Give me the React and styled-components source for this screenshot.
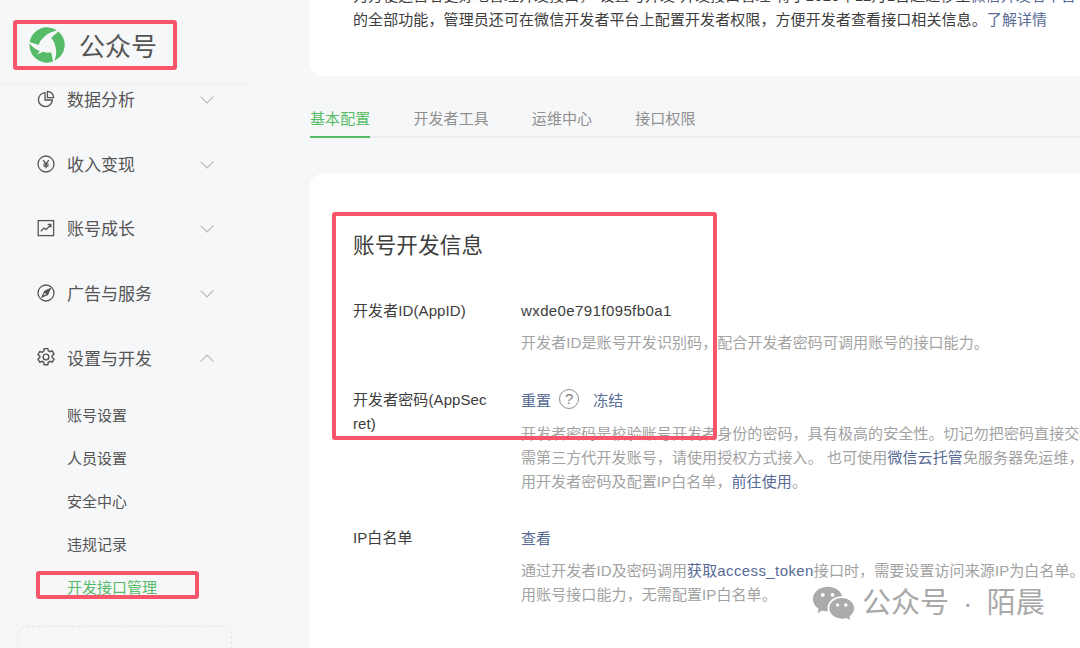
import styled, { createGlobalStyle } from 'styled-components';
import { RiWechatFill } from 'react-icons/ri';

const GlobalStyle = createGlobalStyle`
    html, body {
        margin:0;
        height:648px;
        overflow:hidden;
        background:#f6f7f9;
        font-family:"Liberation Sans","Noto Sans CJK SC",sans-serif;
        color:#3d3d3d;
    }
`;

const menus = [
    { name: '数据分析', icon: 'chart' },
    { name: '收入变现', icon: 'yen' },
    { name: '账号成长', icon: 'growth' },
    { name: '广告与服务', icon: 'compass' },
    { name: '设置与开发', icon: 'gear', open: true },
];
const subMenus = ['账号设置', '人员设置', '安全中心', '违规记录'];
const tabs = ['基本配置', '开发者工具', '运维中心', '接口权限'];
const bladePath = 'M.6 15A17.500 17.500 0 0 1 28 3.600Q20 5 15.500 9.600Q11 13.500 9.600 18Z';

function MenuIcon({ type }) {
    return (
        <IconSvg viewBox="0 0 18 18">
            {type === 'chart' && (
                <>
                    <path d="M8 2.600a7 7 0 1 0 7.400 7.400H8z" />
                    <path d="M10.400 1.400v6.200h6.200a6.200 6.200 0 0 0-6.200-6.200z" />
                </>
            )}
            {type === 'yen' && (
                <>
                    <circle cx="9" cy="9" r="8" />
                    <path d="M6.200 5.200 9 9l2.800-3.800M9 9v4.200M6.400 9.200h5.200M6.400 11h5.200" />
                </>
            )}
            {type === 'growth' && (
                <>
                    <rect x="1.200" y="1.600" width="15.400" height="15" />
                    <path d="M3.800 12.200 7 9l2 1.600 4.400-4.600M10.600 5.400h3.200v3" />
                </>
            )}
            {type === 'compass' && (
                <>
                    <circle cx="9" cy="9" r="8" />
                    <path d="M12.800 5.200 7.600 7.600 5.200 12.800l5.200-2.400z" />
                    <path d="M12.800 5.200 7.600 7.600l2.800 2.800z" fill="#555" />
                </>
            )}
            {type === 'gear' && (
                <g transform="translate(-.9 -.9) scale(1.100)">
                    <path d="M7.400 1.200h3.200l.5 2.200 1.400.8 2.200-.7 1.600 2.800-1.700 1.500v1.600l1.700 1.500-1.600 2.800-2.200-.7-1.400.8-.5 2.200H7.400l-.5-2.200-1.400-.8-2.200.7-1.600-2.800 1.700-1.500V8.300L1.700 6.800l1.600-2.800 2.200.7 1.400-.8z" />
                    <circle cx="9" cy="9" r="2.600" />
                </g>
            )}
        </IconSvg>
    );
}

function Chevron({ up }) {
    return (
        <ChevronSvg viewBox="0 0 14 8">
            <path d={up ? 'M.7 7.300 7 1l6.300 6.300' : 'M.7.700 7 7 13.300.700'} />
        </ChevronSvg>
    );
}

function App() {
    return (
        <Page>
            <GlobalStyle />
            <Sidebar>
                <Brand>
                    <svg width="36" height="36" viewBox="0 0 36 36">
                        <g fill="#56bb68">
                            <path d={bladePath} />
                            <path d={bladePath} transform="rotate(120 18 18)" />
                            <path d={bladePath} transform="rotate(240 18 18)" />
                        </g>
                        <path d="M11 23l2.500 2-5 2.500z" fill="#f6f7f9" />
                    </svg>
                    <BrandName>公众号</BrandName>
                </Brand>
                <Nav>
                    {menus.map((menu) => (
                        <NavRow key={menu.name}>
                            <MenuIcon type={menu.icon} />
                            <NavName>{menu.name}</NavName>
                            <Chevron up={menu.open} />
                        </NavRow>
                    ))}
                </Nav>
                <SubList>
                    {subMenus.map((name) => (
                        <SubItem key={name}>{name}</SubItem>
                    ))}
                    <SubItem $active>开发接口管理</SubItem>
                </SubList>
                <DashedBox />
            </Sidebar>
            <Main>
                <NoticeCard>
                    为方便运营者更好地管理开发接口，“设置与开发-开发接口管理”将于2020年12月1日起迁移至<Link>微信开发者平台中</Link>
                    <br />
                    的全部功能，管理员还可在微信开发者平台上配置开发者权限，方便开发者查看接口相关信息。<Link>了解详情</Link>
                </NoticeCard>
                <TabBar>
                    {tabs.map((tab, i) => (
                        <Tab key={tab} $active={i === 0}>{tab}</Tab>
                    ))}
                </TabBar>
                <InfoCard>
                    <Title>账号开发信息</Title>
                    <Row $after={32}>
                        <Label>开发者ID(AppID)</Label>
                        <div>
                            <Value><Latin>wxde0e791f095fb0a1</Latin></Value>
                            <Desc $gap={9}>开发者ID是账号开发识别码，配合开发者密码可调用账号的接口能力。</Desc>
                        </div>
                    </Row>
                    <Row $after={31}>
                        <Label>开发者密码(AppSecret)</Label>
                        <div>
                            <Value>
                                <Link>重置</Link>
                                <HelpMark>?</HelpMark>
                                <Link>冻结</Link>
                            </Value>
                            <Desc $gap={11}>
                                开发者密码是校验账号开发者身份的密码，具有极高的安全性。切记勿把密码直接交给第三方开发者或直接存储在代码中。如
                                <br />
                                需第三方代开发账号，请使用授权方式接入。 也可使用<Link>微信云托管</Link>免服务器免运维，可免密调用接口
                                <br />
                                用开发者密码及配置IP白名单，<Link>前往使用</Link>。
                            </Desc>
                        </div>
                    </Row>
                    <Row $after={0}>
                        <Label>IP白名单</Label>
                        <div>
                            <Value><Link>查看</Link></Value>
                            <Desc $gap={10}>
                                通过开发者ID及密码调用<Link>获取<Latin>access_token</Latin></Link>接口时，需要设置访问来源IP为白名单。
                                <br />
                                用账号接口能力，无需配置IP白名单。
                            </Desc>
                        </div>
                    </Row>
                </InfoCard>
            </Main>
            <Mark $x={13} $y={20} $w={164} $h={50} />
            <Mark $x={36} $y={571} $w={163} $h={28} />
            <Mark $x={332} $y={212} $w={385} $h={228} />
            <Watermark>
                <RiWechatFill size={45} color="#ababab" />
                <span>公众号 · 陌晨</span>
            </Watermark>
        </Page>
    );
}

const Page = styled.div`
    display:flex;
    position:relative;
    width:1080px;
    height:648px;
    overflow:hidden;
`;
const Sidebar = styled.aside`
    flex:none;
    width:250px;
`;
const Brand = styled.div`
    display:flex;
    align-items:center;
    gap:14px;
    height:84px;
    padding:6px 0 0 29px;
    box-sizing:border-box;
    border-bottom:1px solid #eceef0;
`;
const BrandName = styled.span`
    font-size:26px;
    font-weight:400;
    color:#555;
`;
const Nav = styled.nav`
    display:flex;
    flex-direction:column;
    gap:34.6px;
`;
const NavRow = styled.div`
    display:flex;
    align-items:center;
    height:30px;
    padding-left:37px;
`;
const IconSvg = styled.svg`
    width:18px;
    height:18px;
    flex:none;
    fill:none;
    stroke:#555;
    stroke-width:1.3;
`;
const NavName = styled.span`
    width:133px;
    margin:-.4px 0 0 12px;
    font-size:17px;
    color:#555;
`;
const ChevronSvg = styled.svg`
    width:14px;
    height:8px;
    margin-top:2px;
    fill:none;
    stroke:#b8b8b8;
    stroke-width:1.2;
`;
const SubList = styled.div`
    margin-top:21.5px;
    padding-left:67px;
`;
const SubItem = styled.div`
    height:43px;
    line-height:43px;
    font-size:15px;
    color:${(p) => (p.$active ? '#55bb66' : '#555')};
`;
const DashedBox = styled.div`
    width:215px;
    height:120px;
    margin:17.5px 0 0 17px;
    box-sizing:border-box;
    border:1px dashed #e3e4e6;
    border-radius:10px;
`;
const Main = styled.main`
    flex:1;
    min-width:0;
    margin:-16px 0 0 60px;
    letter-spacing:.09px;
`;
const NoticeCard = styled.div`
    padding:0 0 44px 43px;
    background:#fff;
    border-radius:0 0 0 12px;
    font-size:15px;
    line-height:24px;
    white-space:nowrap;
    overflow:hidden;
`;
const Link = styled.span`
    color:#576b95;
`;
const Latin = styled.span`
    letter-spacing:.4px;
`;
const TabBar = styled.div`
    display:flex;
    gap:43px;
    margin-top:31px;
    border-bottom:2px solid #ebecee;
`;
const Tab = styled.div`
    padding-bottom:5px;
    margin-bottom:-2px;
    font-size:15px;
    line-height:24px;
    color:${(p) => (p.$active ? '#55bb66' : '#8f8f8f')};
    border-bottom:2px solid ${(p) => (p.$active ? '#55bb66' : 'transparent')};
`;
const InfoCard = styled.section`
    height:520px;
    margin-top:36px;
    padding:57px 0 0 43px;
    background:#fff;
    border-radius:12px 0 0 12px;
    overflow:hidden;
`;
const Title = styled.h2`
    margin:0 0 37px;
    font-size:21.6px;
    font-weight:400;
    line-height:30px;
    color:#3d3d3d;
`;
const Row = styled.div`
    display:grid;
    grid-template-columns:168px 1fr;
    margin-bottom:${(p) => p.$after}px;
`;
const Label = styled.div`
    width:136px;
    padding-top:1px;
    font-size:15px;
    line-height:24px;
    word-break:break-all;
`;
const Value = styled.div`
    display:flex;
    align-items:center;
    height:24px;
    font-size:15px;
`;
const HelpMark = styled.span`
    width:18px;
    height:18px;
    margin:0 14px 0 8px;
    border:1px solid #8f8f8f;
    border-radius:50%;
    font-size:15px;
    line-height:18px;
    text-align:center;
    color:#7f7f7f;
`;
const Desc = styled.p`
    margin:${(p) => p.$gap}px 0 0;
    font-size:15px;
    line-height:24px;
    color:#a2a2a2;
    white-space:nowrap;
`;
const Mark = styled.div`
    position:absolute;
    left:${(p) => p.$x}px;
    top:${(p) => p.$y}px;
    width:${(p) => p.$w}px;
    height:${(p) => p.$h}px;
    box-sizing:border-box;
    border:4px solid #f9556a;
    border-radius:3px;
`;
const Watermark = styled.div`
    position:absolute;
    left:811px;
    top:581px;
    display:flex;
    align-items:center;
    gap:6px;
    font-size:29px;
    line-height:45px;
    word-spacing:6px;
    color:#a9a9a9;
    white-space:nowrap;
`;

export default App;
